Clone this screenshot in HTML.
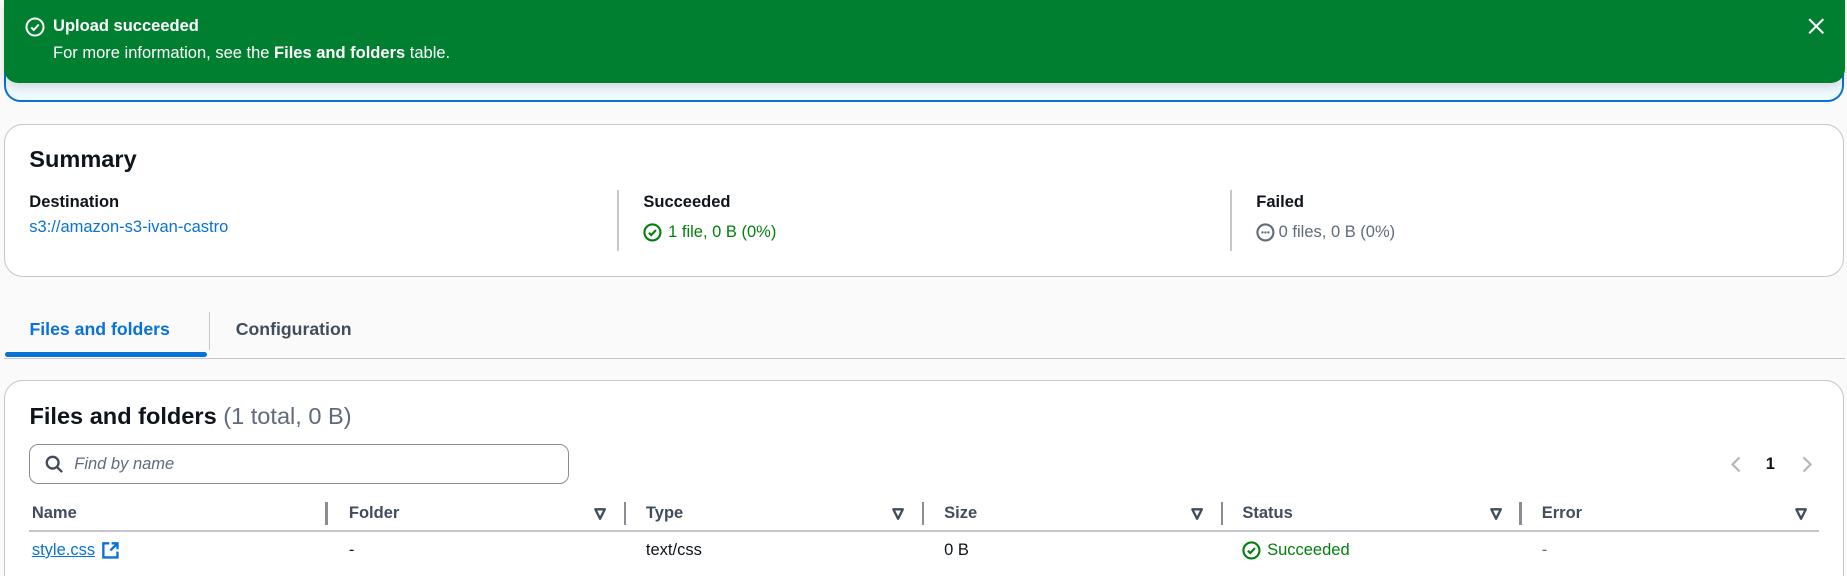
<!DOCTYPE html>
<html><head><meta charset="utf-8"><style>
html,body{margin:0;padding:0;width:1847px;height:576px;overflow:hidden;background:#fafafa}
#w{zoom:1.1787;position:relative;width:1567px;height:489px;font-family:"Liberation Sans",sans-serif;font-size:14px;color:#0f141a}
.a{position:absolute}
.b{font-weight:bold}
.card{position:absolute;left:3px;width:1560px;background:#fff;border:1px solid #c6c6cd;border-radius:16px}
.lbl{font-weight:bold;font-size:14px}
.div{position:absolute;width:1px;background:#c6c6cd}
.th{position:absolute;top:428px;font-weight:bold;color:#414d5c;font-size:14px}
.tri{position:absolute;top:430px}
.sep{position:absolute;top:426px;width:2px;height:19px;background:#8c8c94}
.td{position:absolute;top:459px;font-size:14px}
</style></head><body><div id="w">
<div class="a" style="left:3px;top:40px;width:1558px;height:45px;background:#f0fbff;border:2px solid #0972d3;border-top:none;border-radius:0 0 14px 14px"></div>
<div class="a" style="left:3px;top:0;width:1562px;height:70px;background:#007f30;border-radius:0 0 12px 12px;color:#fff;box-shadow:0 4px 8px rgba(0,0,0,.12)">
<svg class="a" style="left:18px;top:14px" width="17" height="17" viewBox="0 0 16 16"><circle cx="8" cy="8" r="6.8" fill="none" stroke="#fff" stroke-width="1.6"/><path d="M5 8.3l2 2 4-4.3" fill="none" stroke="#fff" stroke-width="1.6"/></svg>
<div class="a b" style="left:42px;top:14px">Upload succeeded</div>
<div class="a" style="left:42px;top:37px">For more information, see the <b>Files and folders</b> table.</div>
<svg class="a" style="left:1531px;top:15px" width="14" height="14" viewBox="0 0 14 14"><path d="M1 1l12 12M13 1L1 13" stroke="#fff" stroke-width="1.8"/></svg>
</div>
<div class="card" style="top:105px;height:128px">
<div class="a b" style="left:21px;top:18px;font-size:20px">Summary</div>
<div class="a lbl" style="left:21px;top:58px">Destination</div>
<div class="a" style="left:21px;top:79px;color:#0972d3">s3://amazon-s3-ivan-castro</div>
<div class="div" style="left:520px;top:55px;height:52px"></div>
<div class="a lbl" style="left:542px;top:58px">Succeeded</div>
<div class="a" style="left:542px;top:83px;color:#037f0c;display:flex;align-items:center;gap:5px"><svg width="16" height="16" viewBox="0 0 16 16"><circle cx="8" cy="8" r="6.8" fill="none" stroke="#037f0c" stroke-width="1.8"/><path d="M5 8.3l2 2 4-4.3" fill="none" stroke="#037f0c" stroke-width="1.8"/></svg>1 file, 0 B (0%)</div>
<div class="div" style="left:1040px;top:55px;height:52px"></div>
<div class="a lbl" style="left:1062px;top:58px">Failed</div>
<div class="a" style="left:1062px;top:83px;color:#5f6b7a;display:flex;align-items:center;gap:3px"><svg width="16" height="16" viewBox="0 0 16 16"><circle cx="8" cy="8" r="6.8" fill="none" stroke="#5f6b7a" stroke-width="1.8"/><circle cx="5.5" cy="8" r="1" fill="#5f6b7a"/><circle cx="8" cy="8" r="1" fill="#5f6b7a"/><circle cx="10.5" cy="8" r="1" fill="#5f6b7a"/></svg>0 files, 0 B (0%)</div>
</div>
<div class="a b" style="left:25px;top:271px;color:#0972d3;font-size:15px">Files and folders</div>
<div class="a" style="left:4px;top:299px;width:172px;height:4px;background:#0972d3;border-radius:2px"></div>
<div class="a" style="left:177px;top:265px;width:1px;height:32px;background:#c6c6cd"></div>
<div class="a b" style="left:200px;top:271px;color:#414d5c;font-size:15px">Configuration</div>
<div class="a" style="left:3px;top:304px;width:1562px;height:1px;background:#c6c6cd"></div>
<div class="card" style="top:322px;height:185px"></div>
<div class="a" style="left:25px;top:342px;font-size:20px"><b>Files and folders</b> <span style="color:#5f6b7a">(1 total, 0 B)</span></div>
<div class="a" style="left:25px;top:377px;width:456px;height:32px;border:1px solid #8c8c94;border-radius:8px;background:#fff"></div>
<svg class="a" style="left:38px;top:386px" width="16" height="16" viewBox="0 0 16 16"><circle cx="6.5" cy="6.5" r="5" fill="none" stroke="#414d5c" stroke-width="2"/><path d="M10 10l4.5 4.5" stroke="#414d5c" stroke-width="2"/></svg>
<div class="a" style="left:63px;top:386px;font-style:italic;color:#5f6b7a">Find by name</div>
<svg class="a" style="left:1467px;top:386px" width="12" height="16" viewBox="0 0 12 16"><path d="M9 2L3 8l6 6" fill="none" stroke="#b4b4bb" stroke-width="1.8"/></svg>
<div class="a b" style="left:1498px;top:386px">1</div>
<svg class="a" style="left:1527px;top:386px" width="12" height="16" viewBox="0 0 12 16"><path d="M3 2l6 6-6 6" fill="none" stroke="#b4b4bb" stroke-width="1.8"/></svg>
<div class="th" style="left:27px">Name</div><div class="sep" style="left:276px"></div>
<div class="th" style="left:296px">Folder</div><div class="sep" style="left:529px"></div>
<div class="th" style="left:548px">Type</div><div class="sep" style="left:782px"></div>
<div class="th" style="left:801px">Size</div><div class="sep" style="left:1036px"></div>
<div class="th" style="left:1054px">Status</div><div class="sep" style="left:1289px"></div>
<div class="th" style="left:1308px">Error</div>
<svg class="tri" style="left:503px" width="12" height="12" viewBox="0 0 12 12"><path d="M2 2h8L6 10z" fill="none" stroke="#414d5c" stroke-width="2" stroke-linejoin="round"/></svg>
<svg class="tri" style="left:756px" width="12" height="12" viewBox="0 0 12 12"><path d="M2 2h8L6 10z" fill="none" stroke="#414d5c" stroke-width="2" stroke-linejoin="round"/></svg>
<svg class="tri" style="left:1010px" width="12" height="12" viewBox="0 0 12 12"><path d="M2 2h8L6 10z" fill="none" stroke="#414d5c" stroke-width="2" stroke-linejoin="round"/></svg>
<svg class="tri" style="left:1263px" width="12" height="12" viewBox="0 0 12 12"><path d="M2 2h8L6 10z" fill="none" stroke="#414d5c" stroke-width="2" stroke-linejoin="round"/></svg>
<svg class="tri" style="left:1522px" width="12" height="12" viewBox="0 0 12 12"><path d="M2 2h8L6 10z" fill="none" stroke="#414d5c" stroke-width="2" stroke-linejoin="round"/></svg>
<div class="a" style="left:25px;top:450px;width:1518px;height:1px;background:#c6c6cd"></div>
<div class="td" style="left:27px;color:#0972d3;text-decoration:underline">style.css</div>
<svg class="a" style="left:86px;top:459px" width="16" height="16" viewBox="0 0 16 16"><path d="M7 2H2v12h12V9" fill="none" stroke="#0972d3" stroke-width="2"/><path d="M9 2h5v5M14 2L8 8" fill="none" stroke="#0972d3" stroke-width="2"/></svg>
<div class="td" style="left:296px">-</div>
<div class="td" style="left:548px">text/css</div>
<div class="td" style="left:801px">0 B</div>
<div class="td" style="left:1054px;color:#037f0c;display:flex;align-items:center;gap:5px;top:459px"><svg width="16" height="16" viewBox="0 0 16 16"><circle cx="8" cy="8" r="6.8" fill="none" stroke="#037f0c" stroke-width="1.8"/><path d="M5 8.3l2 2 4-4.3" fill="none" stroke="#037f0c" stroke-width="1.8"/></svg>Succeeded</div>
<div class="td" style="left:1308px;color:#5f6b7a">-</div>
</div></body></html>
